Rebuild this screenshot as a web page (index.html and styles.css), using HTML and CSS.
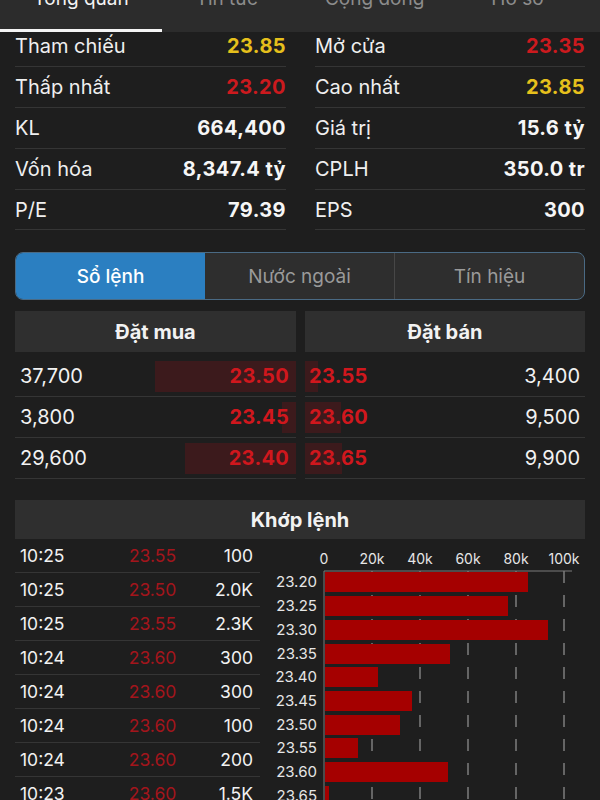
FILE: index.html
```html
<!DOCTYPE html>
<html lang="vi">
<head>
<meta charset="utf-8">
<title>Tổng quan</title>
<link rel="stylesheet" href="styles.css">
</head>
<body>
<nav class="tabs">
  <div class="tab active">Tổng quan</div>
  <div class="tab">Tin tức</div>
  <div class="tab">Cộng đồng</div>
  <div class="tab">Hồ sơ</div>
</nav>
<main class="content">
  <section class="stats">
    <div class="stat-col">
      <div class="stat"><span class="label">Tham chiếu</span><span class="val ref">23.85</span></div>
      <div class="stat"><span class="label">Thấp nhất</span><span class="val down">23.20</span></div>
      <div class="stat"><span class="label">KL</span><span class="val">664,400</span></div>
      <div class="stat"><span class="label">Vốn hóa</span><span class="val">8,347.4 tỷ</span></div>
      <div class="stat"><span class="label">P/E</span><span class="val">79.39</span></div>
    </div>
    <div class="stat-col">
      <div class="stat"><span class="label">Mở cửa</span><span class="val down">23.35</span></div>
      <div class="stat"><span class="label">Cao nhất</span><span class="val ref">23.85</span></div>
      <div class="stat"><span class="label">Giá trị</span><span class="val">15.6 tỷ</span></div>
      <div class="stat"><span class="label">CPLH</span><span class="val">350.0 tr</span></div>
      <div class="stat"><span class="label">EPS</span><span class="val">300</span></div>
    </div>
  </section>

  <div class="segmented">
    <div class="seg active">Sổ lệnh</div>
    <div class="seg">Nước ngoài</div>
    <div class="seg">Tín hiệu</div>
  </div>

  <section class="book">
    <div class="side buy">
      <div class="side-head">Đặt mua</div>
      <div class="brow" style="--w:141px"><span class="qty">37,700</span><span class="px">23.50</span></div>
      <div class="brow" style="--w:14px"><span class="qty">3,800</span><span class="px">23.45</span></div>
      <div class="brow" style="--w:111px"><span class="qty">29,600</span><span class="px">23.40</span></div>
    </div>
    <div class="side sell">
      <div class="side-head">Đặt bán</div>
      <div class="brow" style="--w:13px"><span class="px">23.55</span><span class="qty">3,400</span></div>
      <div class="brow" style="--w:36px"><span class="px">23.60</span><span class="qty">9,500</span></div>
      <div class="brow" style="--w:37px"><span class="px">23.65</span><span class="qty">9,900</span></div>
    </div>
  </section>

  <section class="match">
    <div class="match-head">Khớp lệnh</div>
    <div class="match-body">
      <div class="ticks">
        <div class="tick"><span>10:25</span><span class="tp">23.55</span><span class="tv">100</span></div>
        <div class="tick"><span>10:25</span><span class="tp">23.50</span><span class="tv">2.0K</span></div>
        <div class="tick"><span>10:25</span><span class="tp">23.55</span><span class="tv">2.3K</span></div>
        <div class="tick"><span>10:24</span><span class="tp">23.60</span><span class="tv">300</span></div>
        <div class="tick"><span>10:24</span><span class="tp">23.60</span><span class="tv">300</span></div>
        <div class="tick"><span>10:24</span><span class="tp">23.60</span><span class="tv">100</span></div>
        <div class="tick"><span>10:24</span><span class="tp">23.60</span><span class="tv">200</span></div>
        <div class="tick"><span>10:23</span><span class="tp">23.60</span><span class="tv">1.5K</span></div>
      </div>
      <svg class="chart" width="325" height="261" viewBox="0 0 325 261">
        <g class="xlabels">
          <text x="64" y="25">0</text>
          <text x="112" y="25">20k</text>
          <text x="160" y="25">40k</text>
          <text x="208" y="25">60k</text>
          <text x="256" y="25">80k</text>
          <text x="304" y="25">100k</text>
        </g>
        <g class="grid">
          <line x1="112" y1="32" x2="112" y2="261"/>
          <line x1="160" y1="32" x2="160" y2="261"/>
          <line x1="208" y1="32" x2="208" y2="261"/>
          <line x1="256" y1="32" x2="256" y2="261"/>
          <line x1="304" y1="32" x2="304" y2="261"/>
        </g>
        <line class="axis" x1="64" y1="32" x2="312" y2="32"/>
        <line class="axis" x1="64" y1="32" x2="64" y2="261"/>
        <g class="bars">
          <rect x="65" y="33" width="203" height="20"/>
          <rect x="65" y="57" width="183" height="20"/>
          <rect x="65" y="81" width="223" height="20"/>
          <rect x="65" y="105" width="125" height="20"/>
          <rect x="65" y="128" width="53" height="20"/>
          <rect x="65" y="152" width="87" height="20"/>
          <rect x="65" y="176" width="75" height="20"/>
          <rect x="65" y="199" width="33" height="20"/>
          <rect x="65" y="223" width="123" height="20"/>
          <rect x="65" y="247" width="4" height="20"/>
        </g>
        <g class="ylabels">
          <text x="57" y="48">23.20</text>
          <text x="57" y="72">23.25</text>
          <text x="57" y="96">23.30</text>
          <text x="57" y="120">23.35</text>
          <text x="57" y="143">23.40</text>
          <text x="57" y="167">23.45</text>
          <text x="57" y="191">23.50</text>
          <text x="57" y="214">23.55</text>
          <text x="57" y="238">23.60</text>
          <text x="57" y="262">23.65</text>
        </g>
      </svg>
    </div>
  </section>
</main>
</body>
</html>
```

FILE: styles.css
```css
* { box-sizing: border-box; }

html, body {
  margin: 0;
  height: 800px;
  overflow: hidden;
  background: #1e1e1e;
  color: #f2f2f2;
  font-family: Inter, "Noto Sans", "Liberation Sans", sans-serif;
}

.tabs {
  position: relative;
  z-index: 1;
  display: flex;
  height: 32px;
  background: #2c2c2c;
  overflow: hidden;
}

.tab {
  margin-top: -11px;
  height: 43px;
  padding: 0 33.5px;
  font-size: 19px;
  line-height: 20px;
  color: #8c8c8c;
  border-bottom: 3px solid transparent;
}

.tab.active {
  color: #f4f4f4;
  border-bottom-color: #f4f4f4;
}

.content {
  padding: 0 15px;
}

/* stats */
.stats {
  margin-top: -6px;
  display: grid;
  grid-template-columns: 271px 270px;
  column-gap: 29px;
}

.stat {
  display: flex;
  justify-content: space-between;
  align-items: center;
  height: 41px;
  border-bottom: 1px solid #353535;
  font-size: 20px;
}

.stat-col .stat:last-child { height: 40px; }

.label { color: #efefef; }

.val {
  font-weight: 700;
  color: #f6f6f6;
  letter-spacing: 0.4px;
}

.val.ref { color: #e6c01c; }
.val.down { color: #cc1a1e; }

/* segmented */
.segmented {
  margin-top: 22px;
  display: flex;
  height: 48px;
  border: 1px solid #4a6a84;
  border-radius: 8px;
  background: #2e2e2e;
  overflow: hidden;
}

.seg {
  flex: 1;
  display: flex;
  align-items: center;
  justify-content: center;
  font-size: 19px;
  color: #9a9a9a;
}

.seg + .seg { border-left: 1px solid #474747; }

.seg.active {
  background: #2b7fc1;
  color: #ffffff;
  font-weight: 500;
}

.seg.active + .seg { border-left: none; }

/* order book */
.book {
  margin-top: 11px;
  display: grid;
  grid-template-columns: 281px 280px;
  column-gap: 9px;
}

.side-head {
  height: 41px;
  margin-bottom: 4px;
  display: flex;
  align-items: center;
  justify-content: center;
  background: #2f2f2f;
  font-size: 20px;
  font-weight: 700;
}

.brow {
  display: flex;
  justify-content: space-between;
  align-items: center;
  height: 41px;
  border-bottom: 1px solid #353535;
  font-size: 20px;
  background-repeat: no-repeat;
  background-image: linear-gradient(#3c1a1c, #3c1a1c);
  background-size: var(--w) calc(100% - 9px);
}

.buy .brow {
  padding: 0 7px 0 5px;
  background-position: right center;
}

.sell .brow {
  padding: 0 5px 0 4px;
  background-position: left center;
}

.brow .qty { color: #f2f2f2; }

.brow .px {
  color: #d0171d;
  font-weight: 700;
  letter-spacing: 0.3px;
}

/* match */
.match { margin-top: 21px; }

.match-head {
  height: 39px;
  display: flex;
  align-items: center;
  justify-content: center;
  background: #2f2f2f;
  font-size: 20px;
  font-weight: 700;
}

.match-body {
  display: flex;
}

.ticks {
  width: 245px;
  flex: none;
}

.tick {
  display: grid;
  grid-template-columns: 90px 85px 1fr;
  align-items: center;
  height: 34px;
  padding: 0 7px 0 5px;
  border-bottom: 1px solid #353535;
  font-size: 17.5px;
  color: #f2f2f2;
}

.tick .tp {
  color: #a3151c;
  text-align: center;
}

.tick .tv { text-align: right; }

.chart {
  flex: none;
  display: block;
  font-family: Inter, "Noto Sans", "Liberation Sans", sans-serif;
}

.xlabels text {
  fill: #e6e6e6;
  font-size: 14px;
  text-anchor: middle;
}

.ylabels text {
  fill: #e6e6e6;
  font-size: 15px;
  text-anchor: end;
}

.grid line {
  stroke: #7e7e7e;
  stroke-width: 1.5;
  stroke-dasharray: 12 12;
}

.axis {
  stroke: #7a7a7a;
  stroke-width: 1;
}

.bars rect { fill: #a50000; }
```
